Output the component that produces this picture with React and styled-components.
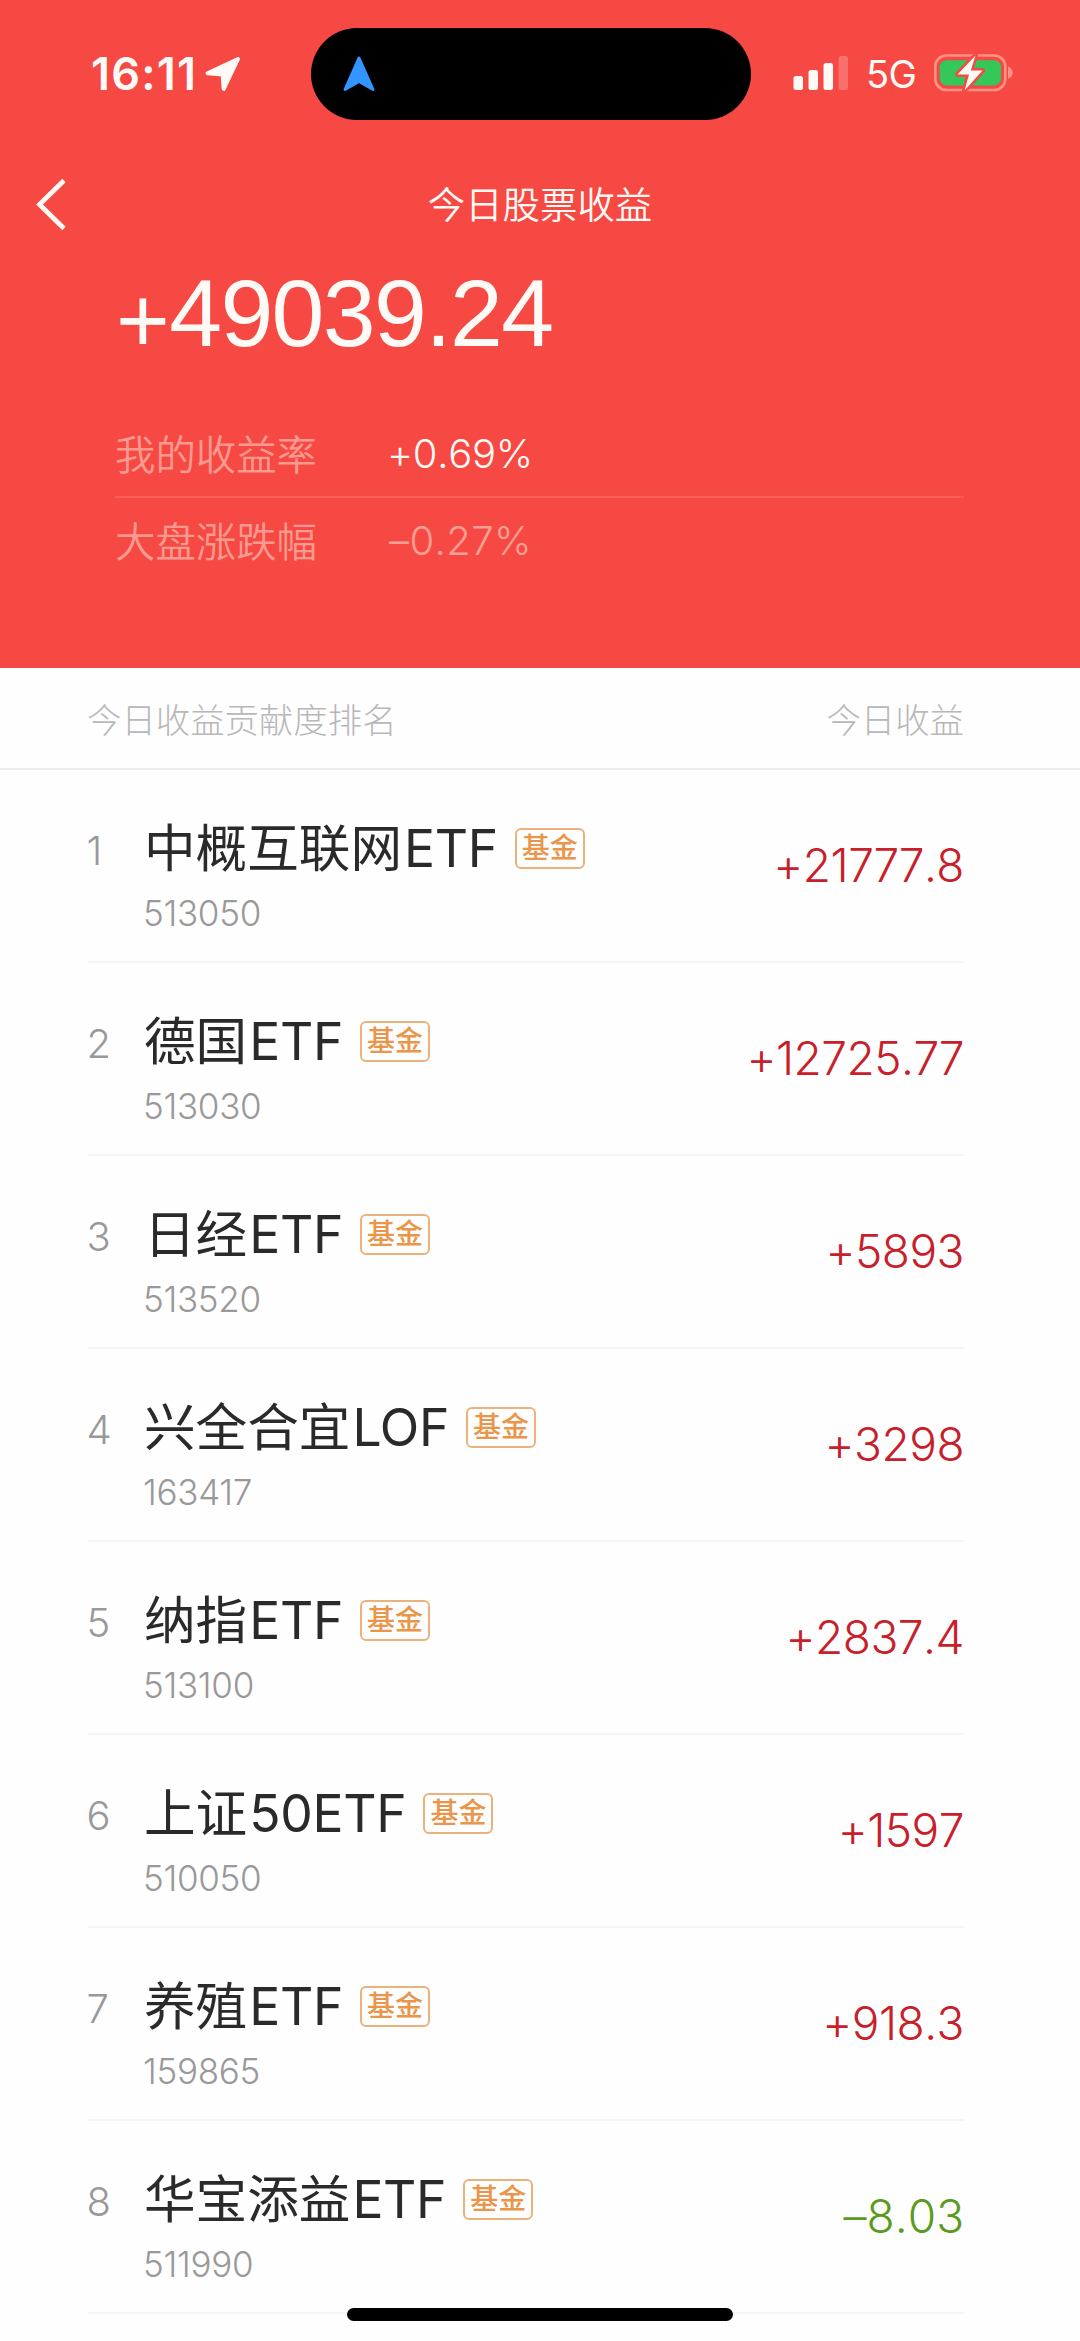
import React from 'react';
import styled, { createGlobalStyle, css } from 'styled-components';

const GlobalStyle = createGlobalStyle`
  *, *::before, *::after {
    box-sizing: border-box;
  }
  body {
    margin: 0;
    background: #fefefe;
    font-family: Inter, 'Noto Sans CJK SC', sans-serif;
    -webkit-font-smoothing: antialiased;
  }
`;

// keeps the plus and minus signs low, next to the baseline
const figures = css`
  font-feature-settings: 'calt' 0;
  font-kerning: none;
`;

const Screen = styled.div`
  position: relative;
  width: 1080px;
  height: 2341px;
  overflow: hidden;
  background: #fefefe;
`;

const Header = styled.header`
  height: 668px;
  background: #f64944;
  color: #fffaf6;
`;

const StatusBar = styled.div`
  height: 148px;
  padding-top: 28px;
  display: flex;
  align-items: flex-start;
`;

const StatusLeft = styled.div`
  width: 311px;
  height: 92px;
  padding-left: 91px;
  display: flex;
  align-items: center;
`;

const Clock = styled.span`
  width: 114px;
  font-size: 45px;
  line-height: 92px;
  font-weight: 600;
  letter-spacing: 1.2px;
  white-space: nowrap;
`;

const Island = styled.div`
  width: 440px;
  height: 92px;
  padding-left: 32px;
  border-radius: 46px;
  background: #000;
  display: flex;
  align-items: center;
`;

const StatusRight = styled.div`
  height: 92px;
  padding-left: 42px;
  display: flex;
  align-items: center;
  svg {
    margin-bottom: 2px;
  }
`;

const Network = styled.span`
  width: 86px;
  padding-left: 18px;
  font-size: 38px;
  line-height: 94px;
  font-weight: 400;
  letter-spacing: -0.6px;
  white-space: nowrap;
`;

const NavBar = styled.nav`
  height: 112px;
  padding: 0 34px;
  display: grid;
  grid-template-columns: 60px 1fr 60px;
  align-items: center;
`;

const BackButton = styled.button`
  padding: 0;
  border: 0;
  background: none;
  display: flex;
`;

const Title = styled.h1`
  margin: 4px 0 0;
  font-size: 37.4px;
  line-height: 56px;
  font-weight: 350;
  text-align: center;
`;

const Total = styled.div`
  height: 130px;
  padding-left: 116px;
  font-family: 'Liberation Sans', Arial, sans-serif;
  font-size: 95px;
  line-height: 106px;
  letter-spacing: -1.6px;
`;

const Sign = styled.span`
  margin-right: 1px;
  font-size: 92px;
  line-height: 1;
  vertical-align: -6px;
`;

const Stats = styled.div`
  margin: 20px 116px 0 115px;
`;

const StatRow = styled.div`
  height: 86px;
  display: flex;
  align-items: center;
  font-size: 40.4px;
  font-weight: 350;
  & + & {
    border-top: 2px solid rgba(255, 255, 255, 0.12);
  }
`;

const StatLabel = styled.span`
  width: 272px;
  padding-bottom: 2px;
  color: rgba(255, 225, 210, 0.54);
`;

const StatValue = styled.span`
  font-size: 40px;
  font-weight: 300;
  letter-spacing: -0.3px;
  ${figures}
  ${({ $muted }) =>
    $muted &&
    css`
      padding-left: 2px;
      letter-spacing: 0.4px;
      color: rgba(255, 225, 210, 0.58);
    `}
`;

const ListHead = styled.div`
  height: 102px;
  padding: 0 116px 1px 87px;
  border-bottom: 2px solid #ededed;
  display: flex;
  justify-content: space-between;
  align-items: center;
  font-size: 34.4px;
  font-weight: 300;
  color: #b8b8b8;
`;

const List = styled.ol`
  margin: 0;
  padding: 0 116px 0 88px;
  list-style: none;
`;

const Item = styled.li`
  height: 193px;
  border-bottom: 2px solid #f5f5f5;
  display: grid;
  grid-template-columns: 56px 1fr auto;
`;

const Rank = styled.span`
  margin-left: -1.5px;
  padding-top: 51px;
  font-size: 40px;
  line-height: 60px;
  font-weight: 300;
  color: #999;
`;

const NameLine = styled.div`
  margin-top: 48px;
  height: 60px;
  display: flex;
  align-items: center;
`;

const Name = styled.span`
  font-size: 51.6px;
  line-height: 60px;
  color: #2a2a2a;
  white-space: nowrap;
`;

const Latin = styled.span`
  margin-left: 2px;
  letter-spacing: -0.3px;
`;

const Tag = styled.span`
  width: 70px;
  height: 41px;
  margin-left: 17px;
  border: 2px solid #ecb27c;
  border-radius: 6px;
  font-size: 28px;
  line-height: 37px;
  font-weight: 500;
  text-align: center;
  color: #e9954a;
`;

const Code = styled.div`
  margin: 14px 0 0 -1px;
  font-size: 35px;
  line-height: 42px;
  font-weight: 300;
  letter-spacing: -0.3px;
  color: #999;
`;

const Amount = styled.span`
  padding-top: 65px;
  font-size: 46px;
  line-height: 60px;
  font-weight: 300;
  letter-spacing: -0.5px;
  color: #c8202a;
  ${figures}
  ${({ $loss }) =>
    $loss &&
    css`
      letter-spacing: 0;
      color: #5a9a1e;
    `}
`;

const HomeIndicator = styled.div`
  position: absolute;
  left: 347px;
  bottom: 20px;
  width: 386px;
  height: 13px;
  border-radius: 7px;
  background: #000;
`;

const LocationIcon = () => (
  <svg width="36" height="36" viewBox="0 0 36 36">
    <path
      d="M2.500 17.200 33 3 18.700 32.800 17.600 18.400Z"
      fill="#fffaf6"
      stroke="#fffaf6"
      strokeWidth="4"
      strokeLinejoin="round"
    />
  </svg>
);

const NavigationIcon = () => (
  <svg width="32" height="36" viewBox="0 0 32 36">
    <path
      d="M16 2 30 33.500 16 25.500 2 33.500Z"
      fill="#3395ff"
      stroke="#3395ff"
      strokeWidth="3"
      strokeLinejoin="round"
    />
  </svg>
);

const SignalIcon = () => (
  <svg width="55" height="34" viewBox="0 0 55 34">
    <g fill="#fffaf6">
      <rect x="0.500" y="20" width="9.500" height="14" rx="2.500" />
      <rect x="15.500" y="14" width="9.500" height="20" rx="2.500" />
      <rect x="30.500" y="7" width="9.500" height="27" rx="2.500" />
      <rect x="45.500" y="0" width="9.500" height="34" rx="2.500" opacity="0.22" />
    </g>
  </svg>
);

const BatteryIcon = () => (
  <svg width="80" height="38" viewBox="0 0 80 38">
    <rect x="1.300" y="1.500" width="70" height="34.500" rx="11" fill="none" stroke="#ff9284" strokeWidth="2.600" />
    <path d="M74 12.500c3 1.200 4.600 3.400 4.600 6.200s-1.600 5-4.600 6.200Z" fill="#ff9284" />
    <rect x="5.600" y="6.200" width="61.400" height="25.200" rx="7" fill="#34c759" />
    <path
      d="M41.500 1.500 23.500 20.500h11.500L30.500 36.500 48.500 16.500H36.800Z"
      fill="#fffaf6"
      stroke="#f64944"
      strokeWidth="5"
      strokeLinejoin="round"
      paintOrder="stroke"
    />
  </svg>
);

const BackIcon = () => (
  <svg width="34" height="54" viewBox="0 0 34 54">
    <path d="M30 3.500 5.500 27.500 30 51.500" fill="none" stroke="#fffaf6" strokeWidth="4.800" />
  </svg>
);

const funds = [
  { name: '中概互联网', suffix: 'ETF', code: '513050', amount: '+21777.8' },
  { name: '德国', suffix: 'ETF', code: '513030', amount: '+12725.77' },
  { name: '日经', suffix: 'ETF', code: '513520', amount: '+5893' },
  { name: '兴全合宜', suffix: 'LOF', code: '163417', amount: '+3298' },
  { name: '纳指', suffix: 'ETF', code: '513100', amount: '+2837.4' },
  { name: '上证', suffix: '50ETF', code: '510050', amount: '+1597' },
  { name: '养殖', suffix: 'ETF', code: '159865', amount: '+918.3' },
  { name: '华宝添益', suffix: 'ETF', code: '511990', amount: '–8.03' },
];

const App = () => (
  <Screen>
    <GlobalStyle />
    <Header>
      <StatusBar>
        <StatusLeft>
          <Clock>16:11</Clock>
          <LocationIcon />
        </StatusLeft>
        <Island>
          <NavigationIcon />
        </Island>
        <StatusRight>
          <SignalIcon />
          <Network>5G</Network>
          <BatteryIcon />
        </StatusRight>
      </StatusBar>
      <NavBar>
        <BackButton aria-label="返回">
          <BackIcon />
        </BackButton>
        <Title>今日股票收益</Title>
      </NavBar>
      <Total>
        <Sign>+</Sign>49039.24
      </Total>
      <Stats>
        <StatRow>
          <StatLabel>我的收益率</StatLabel>
          <StatValue>+0.69%</StatValue>
        </StatRow>
        <StatRow>
          <StatLabel>大盘涨跌幅</StatLabel>
          <StatValue $muted>–0.27%</StatValue>
        </StatRow>
      </Stats>
    </Header>
    <ListHead>
      <span>今日收益贡献度排名</span>
      <span>今日收益</span>
    </ListHead>
    <List>
      {funds.map(({ name, suffix, code, amount }, index) => (
        <Item key={code}>
          <Rank>{index + 1}</Rank>
          <div>
            <NameLine>
              <Name>
                {name}
                <Latin>{suffix}</Latin>
              </Name>
              <Tag>基金</Tag>
            </NameLine>
            <Code>{code}</Code>
          </div>
          <Amount $loss={amount.startsWith('–')}>{amount}</Amount>
        </Item>
      ))}
    </List>
    <HomeIndicator />
  </Screen>
);

export default App;
